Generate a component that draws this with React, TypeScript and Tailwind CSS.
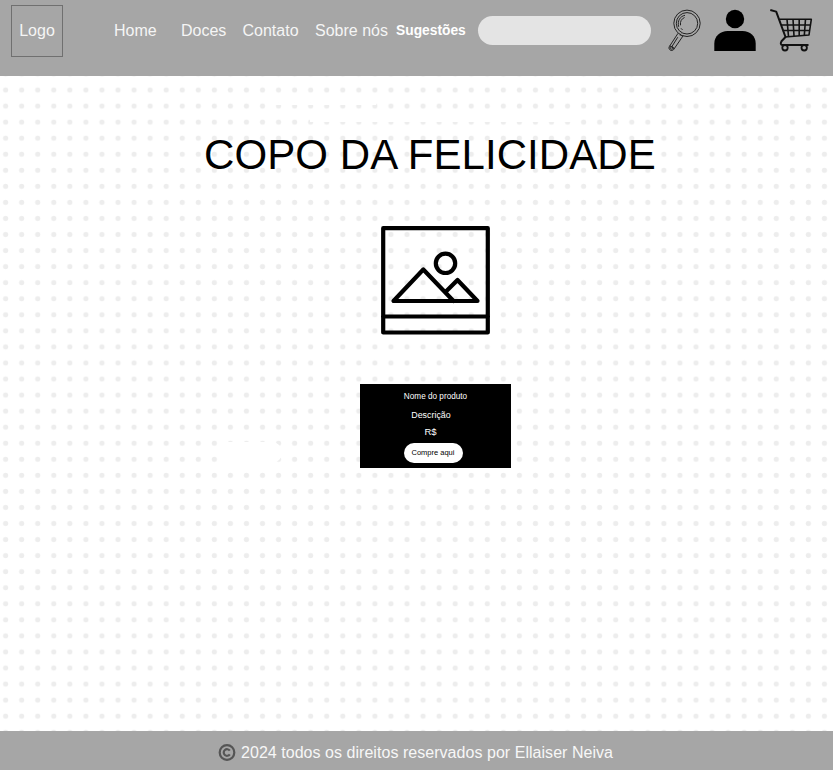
import React from "react";

function DotGrid() {
  return (
    <svg className="absolute inset-0 h-full w-full" aria-hidden="true">
      <defs>
        <pattern id="dots" x="-2.4" y="6" width="16.055" height="16.055" patternUnits="userSpaceOnUse">
          <circle cx="8.03" cy="8.03" r="2.6" fill="#ededed" />
        </pattern>
      </defs>
      <rect width="100%" height="100%" fill="url(#dots)" />
      <rect x="276" y="27" width="100" height="2" fill="#fff" />
      <rect x="310" y="42" width="266" height="4" fill="#fff" />
      <rect x="217" y="366" width="65" height="21" rx="10" fill="#fff" />
    </svg>
  );
}

function MagnifierIcon() {
  return (
    <svg className="ml-[17px] mt-[9px] h-[43px] w-[34px] shrink-0" viewBox="0 0 34 43" fill="none" stroke="#222" strokeWidth="1">
      <circle cx="19" cy="14.3" r="13.2" />
      <circle cx="19" cy="14.3" r="10.7" />
      <path d="M10.7 17.8C9.2 11.8 12 7.3 17 6.3M12.5 16.3C12 12.3 13.5 9.8 16.5 8.5M13 19.3l1.5 1.6" />
      <path d="M10 24.3L1.2 37.8c-1.2 2.7 2.3 5 4.4 2.8L15.2 26.7M11.8 25.5l2 1.3M9.8 28.2L3.5 38.2M1.8 36.7l4.5 3M13 24.7l-1 1.5" />
      <ellipse cx="3.6" cy="38.9" rx="1.7" ry="1.3" />
    </svg>
  );
}

function UserIcon() {
  return (
    <svg className="ml-[12px] mt-[9px] h-[43px] w-[42px] shrink-0" viewBox="0 0 42 43" fill="#000">
      <circle cx="21" cy="10" r="9.2" />
      <path d="M.3 42V34.5C.3 27 6.5 22 13.5 22h15C36 22 41.7 27 41.7 34.5V42Z" />
    </svg>
  );
}

function CartIcon() {
  return (
    <svg className="ml-[14px] mt-[9px] h-[43px] w-[43px] shrink-0" viewBox="0 0 43 43" fill="none" stroke="#111" strokeWidth="1.6" strokeLinejoin="round">
      <path strokeWidth="2" d="M.3 1L6.2 2.6L15.5 28L11.5 32.2C10.5 34 10.5 36 12 36H38.5" />
      <path d="M9.5 10.3H41.3L39 26L15 28M11 16H40.5M12.8 21.5H39.7" />
      <path d="M17 10.3L18.5 27.5M23 10.3L24 27M29.2 10.3V27M35.5 10.3L34.3 26.5" />
      <circle cx="15" cy="38.8" r="2.7" strokeWidth="1.8" />
      <circle cx="34.2" cy="38.8" r="2.7" strokeWidth="1.8" />
    </svg>
  );
}

function Header() {
  return (
    <header className="flex h-[76px] items-start whitespace-nowrap bg-[#a6a6a6] text-[16px] leading-[20px] text-[#f5f5f5]">
      <div className="ml-[11px] mt-[5px] flex h-[52px] w-[52px] shrink-0 items-center justify-center border border-[#707070]">Logo</div>
      <nav className="mt-[21px] flex shrink-0">
        <a className="ml-[51px] w-[67px]">Home</a>
        <a className="w-[61.5px]">Doces</a>
        <a className="w-[72.5px]">Contato</a>
        <a className="w-[81px]">Sobre nós</a>
        <a className="w-[82px] text-[13.8px] font-bold text-white">Sugestões</a>
      </nav>
      <div className="mt-[16px] h-[29px] w-[173px] shrink-0 rounded-full bg-[#e4e4e4]" />
      <MagnifierIcon />
      <UserIcon />
      <CartIcon />
    </header>
  );
}

function ProductImage() {
  return (
    <svg className="ml-[381px] mt-[48px] h-[109px] w-[109px]" viewBox="0 0 109 109" fill="none" stroke="#000" strokeWidth="4.2" strokeLinejoin="round" strokeLinecap="round">
      <path d="M2.2 2.2H106.8V106.5H2.2ZM2 90.5H107" />
      <path d="M72.5 75L42.3 43.5L12.5 75H96.5L76.5 54L65 65.5" />
      <circle cx="64.5" cy="37.3" r="9.7" />
    </svg>
  );
}

function ProductCard() {
  return (
    <section className="ml-[360px] mt-[49px] flex h-[84px] w-[151px] flex-col items-center whitespace-nowrap bg-black text-white">
      <p className="mt-[7px] text-[8.2px] leading-[12px]">Nome do produto</p>
      <p className="mt-[6px] pr-[9px] text-[8.9px] leading-[12px]">Descrição</p>
      <p className="mt-[5px] pr-[10px] text-[9.5px] leading-[12px]">R$</p>
      <button className="mr-[5px] mt-[5px] h-[20px] w-[59px] shrink-0 rounded-full bg-white text-[7.5px] leading-[20px] text-black">Compre aqui</button>
    </section>
  );
}

export default function App() {
  return (
    <div className="flex h-[770px] w-[833px] flex-col overflow-hidden bg-white font-['Liberation_Sans',Arial,sans-serif]">
      <Header />
      <main className="relative h-[655px] shrink-0">
        <DotGrid />
        <div className="relative flex flex-col pt-[56px]">
          <h1 className="ml-[204px] whitespace-nowrap text-[42px] leading-[46px] tracking-[0.08px] text-black">COPO DA FELICIDADE</h1>
          <ProductImage />
          <ProductCard />
        </div>
      </main>
      <footer className="flex h-[39px] items-center whitespace-nowrap bg-[#a6a6a6] pt-[4px] text-[16px] leading-[20px] text-[#f7f7f7]">
        <svg className="ml-[218px] h-[18px] w-[18px]" viewBox="0 0 18 18" fill="none" stroke="#555" strokeWidth="2.2">
          <circle cx="9" cy="8.5" r="7.3" />
          <path d="M11.8 6.7A3.3 3.3 0 1 0 11.8 10.3" />
        </svg>
        <p className="ml-[5px] tracking-[0.04px]">2024 todos os direitos reservados por Ellaiser Neiva</p>
      </footer>
    </div>
  );
}
